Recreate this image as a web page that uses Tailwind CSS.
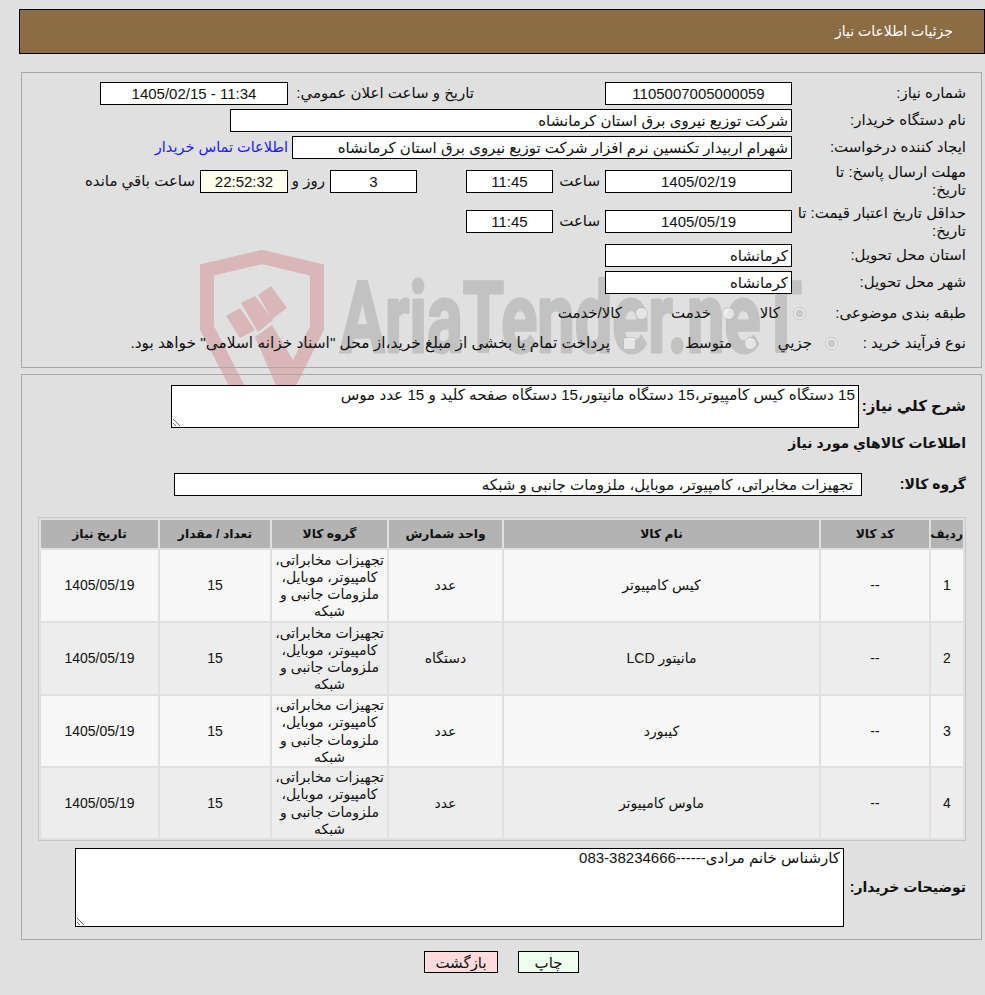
<!DOCTYPE html>
<html lang="fa" dir="rtl">
<head>
<meta charset="UTF-8" />
<title>جزئیات اطلاعات نیاز</title>
<script src="https://cdn.jsdelivr.net/npm/@tailwindcss/browser@4"></script>
</head>
<body class="relative h-[995px] w-[985px] overflow-hidden bg-[#e0e0e0] font-['Liberation_Sans','DejaVu_Sans',sans-serif] text-[15px] text-[#111]">

  <!-- watermark -->
  <svg class="absolute left-[190px] top-[240px] z-0" width="640" height="170" viewBox="190 240 640 170">
    <path d="M207 270 L262 257 L317 270 L317 328 L285 392 L262 405 L240 392 L207 328 Z" fill="none" stroke="#d9b6b8" stroke-width="14"/>
    <path d="M226 316 L240 308 L255 330 L240 338 Z M241 303 L255 296 L273 320 L258 332 Z M258 295 L271 286 L287 308 L272 319 Z M255 337 L272 325 L302 375 L280 395 Z" fill="#d9b6b8"/>
    <text x="340" y="352" font-family="Roboto" font-weight="700" font-size="98" fill="#c2c2c2" stroke="#c2c2c2" stroke-width="3" stroke-linejoin="round" textLength="462" lengthAdjust="spacingAndGlyphs" direction="ltr">AriaTender.neT</text>
  </svg>

  <header class="absolute left-[19px] top-[9px] z-10 flex h-[45px] w-[966px] items-center border border-black bg-[#8c6c42] pr-[31px] text-[14px] text-white">جزئیات اطلاعات نیاز</header>

  <div class="relative z-10 pt-[72px]">
    <!-- first panel -->
    <section class="mr-[3px] h-[296px] w-[961px] border border-[#a9a9a9] pr-[15px] pt-[9px]">
      <div class="flex h-[23px] items-center">
        <label class="w-[166px]">شماره نیاز:</label>
        <input readonly value="1105007005000059" class="mr-[8px] h-[23px] w-[187px] border border-black bg-white text-center" />
        <label class="mr-[131px] w-[181px] whitespace-nowrap">تاریخ و ساعت اعلان عمومي:</label>
        <input readonly value="11:34 - 1405/02/15" class="mr-[5px] h-[23px] w-[188px] border border-black bg-white text-center" />
      </div>
      <div class="mt-[4px] flex h-[23px] items-center">
        <label class="w-[166px]">نام دستگاه خریدار:</label>
        <input readonly value="شرکت توزیع نیروی برق استان کرمانشاه" class="mr-[8px] h-[23px] w-[562px] border border-black bg-white px-[3px]" />
      </div>
      <div class="mt-[4px] flex h-[23px] items-center">
        <label class="w-[166px]">ایجاد کننده درخواست:</label>
        <input readonly value="شهرام اربیدار تکنسین نرم افزار شرکت توزیع نیروی برق استان کرمانشاه" class="mr-[8px] h-[23px] w-[500px] border border-black bg-white px-[3px]" />
        <a class="mr-[4px] text-[14.5px] text-[#1a1aff]">اطلاعات تماس خریدار</a>
      </div>
      <div class="mt-[4px] flex h-[36px] items-center">
        <label class="w-[166px] leading-[18px]">مهلت ارسال پاسخ: تا تاریخ:</label>
        <input readonly value="1405/02/19" class="mr-[8px] h-[23px] w-[187px] border border-black bg-white text-center" />
        <span class="mr-[5px] w-[47px]">ساعت</span>
        <input readonly value="11:45" class="h-[23px] w-[87px] border border-black bg-white text-center" />
        <input readonly value="3" class="mr-[49px] h-[23px] w-[87px] border border-black bg-white text-center" />
        <span class="mr-[5px] w-[37px] whitespace-nowrap">روز و</span>
        <input readonly value="22:52:32" class="h-[23px] w-[88px] border border-black bg-[#ffffee] text-center" />
        <span class="mr-[5px] whitespace-nowrap">ساعت باقي مانده</span>
      </div>
      <div class="mt-[4px] flex h-[37px] items-center">
        <label class="w-[174px] leading-[18px]">حداقل تاریخ اعتبار قیمت: تا تاریخ:</label>
        <input readonly value="1405/05/19" class="h-[23px] w-[187px] border border-black bg-white text-center" />
        <span class="mr-[5px] w-[47px]">ساعت</span>
        <input readonly value="11:45" class="h-[23px] w-[87px] border border-black bg-white text-center" />
      </div>
      <div class="mt-[4px] flex h-[23px] items-center">
        <label class="w-[166px]">استان محل تحویل:</label>
        <input readonly value="کرمانشاه" class="mr-[8px] h-[23px] w-[187px] border border-black bg-white px-[3px]" />
      </div>
      <div class="mt-[4px] flex h-[23px] items-center">
        <label class="w-[166px]">شهر محل تحویل:</label>
        <input readonly value="کرمانشاه" class="mr-[8px] h-[23px] w-[187px] border border-black bg-white px-[3px]" />
      </div>
      <div class="mt-[4px] flex h-[30px] items-center">
        <label class="w-[160px] shrink-0">طبقه بندی موضوعی:</label>
        <input type="radio" checked disabled name="t" class="size-[13px] appearance-auto" />
        <span class="mr-[13px] w-[45px]">کالا</span>
        <input type="radio" disabled name="t" class="size-[13px] appearance-auto" />
        <span class="mr-[11px] w-[63px]">خدمت</span>
        <input type="radio" disabled name="t" class="size-[13px] appearance-auto" />
        <span class="mr-[13px]">کالا/خدمت</span>
      </div>
      <div class="flex h-[30px] items-center">
        <label class="w-[128px] shrink-0">نوع فرآیند خرید :</label>
        <input type="radio" checked disabled name="p" class="size-[13px] appearance-auto" />
        <span class="mr-[13px] w-[55px]">جزیي</span>
        <input type="radio" disabled name="p" class="size-[13px] appearance-auto" />
        <span class="mr-[12px] w-[96px]">متوسط</span>
        <input type="checkbox" disabled class="size-[13px] appearance-auto" />
        <span class="mr-[13px] text-[15.4px]">پرداخت تمام یا بخشی از مبلغ خرید،از محل "اسناد خزانه اسلامی" خواهد بود.</span>
      </div>
    </section>

    <!-- second panel -->
    <section class="mr-[3px] mt-[6px] h-[566px] w-[961px] border border-[#a9a9a9] pr-[15px] pt-[10px]">
      <div class="flex h-[43px] items-center">
        <label class="w-[107px] shrink-0 text-[15px] font-bold">شرح کلي نیاز:</label>
        <textarea readonly class="h-[43px] w-[688px] border border-black bg-white px-[3px] text-[15.2px] leading-[17px]">15 دستگاه کیس کامپیوتر،15 دستگاه مانیتور،15 دستگاه صفحه کلید و 15 عدد موس</textarea>
      </div>
      <div class="flex h-[30px] items-center text-[14px] font-bold">اطلاعات کالاهاي مورد نیاز</div>
      <div class="mt-[15px] flex h-[23px] items-center">
        <label class="w-[104px] shrink-0 text-[14px] font-bold">گروه کالا:</label>
        <input readonly value="تجهیزات مخابراتی، کامپیوتر، موبایل، ملزومات جانبی و شبکه" class="h-[23px] w-[688px] border border-black bg-white px-[8px]" />
      </div>

      <table class="mt-[21px] w-[928px] table-fixed border-separate border-spacing-[2px] border border-[#c8c8c8] text-center text-[14px]">
        <thead>
          <tr class="h-[28px] bg-[#b3b3b3] text-[12.3px] font-bold">
            <th class="w-[32px]">ردیف</th>
            <th class="w-[108px]">کد کالا</th>
            <th class="w-[315px]">نام کالا</th>
            <th class="w-[113px]">واحد شمارش</th>
            <th class="w-[115px]">گروه کالا</th>
            <th class="w-[110px]">تعداد / مقدار</th>
            <th class="w-[117px]">تاریخ نیاز</th>
          </tr>
        </thead>
        <tbody class="leading-[17.2px] [&_td]:pt-[1px]">
          <tr class="h-[71px] bg-[#f7f7f7]">
            <td>1</td><td>--</td><td>کیس کامپیوتر</td><td>عدد</td>
            <td>تجهیزات مخابراتی، کامپیوتر، موبایل، ملزومات جانبی و شبکه</td><td>15</td><td>1405/05/19</td>
          </tr>
          <tr class="h-[71px] bg-[#ededed]">
            <td>2</td><td>--</td><td>مانیتور LCD</td><td>دستگاه</td>
            <td>تجهیزات مخابراتی، کامپیوتر، موبایل، ملزومات جانبی و شبکه</td><td>15</td><td>1405/05/19</td>
          </tr>
          <tr class="h-[70px] bg-[#f7f7f7]">
            <td>3</td><td>--</td><td>کیبورد</td><td>عدد</td>
            <td>تجهیزات مخابراتی، کامپیوتر، موبایل، ملزومات جانبی و شبکه</td><td>15</td><td>1405/05/19</td>
          </tr>
          <tr class="h-[70px] bg-[#ededed]">
            <td>4</td><td>--</td><td>ماوس کامپیوتر</td><td>عدد</td>
            <td>تجهیزات مخابراتی، کامپیوتر، موبایل، ملزومات جانبی و شبکه</td><td>15</td><td>1405/05/19</td>
          </tr>
        </tbody>
      </table>

      <div class="mt-[7px] flex h-[79px] items-center">
        <label class="w-[122px] shrink-0 whitespace-nowrap text-[14px] font-bold">توضیحات خریدار:</label>
        <textarea readonly class="h-[79px] w-[769px] border border-black bg-white px-[3px] leading-[17px]">کارشناس خانم مرادی------38234666-083</textarea>
      </div>
    </section>

    <div class="mr-[406px] mt-[11px] flex h-[22px] gap-[20px]">
      <button class="w-[61px] border border-black bg-[#eeffee]">چاپ</button>
      <button class="w-[74px] border border-black bg-[#ffdcdc]">بازگشت</button>
    </div>
  </div>
</body>
</html>
